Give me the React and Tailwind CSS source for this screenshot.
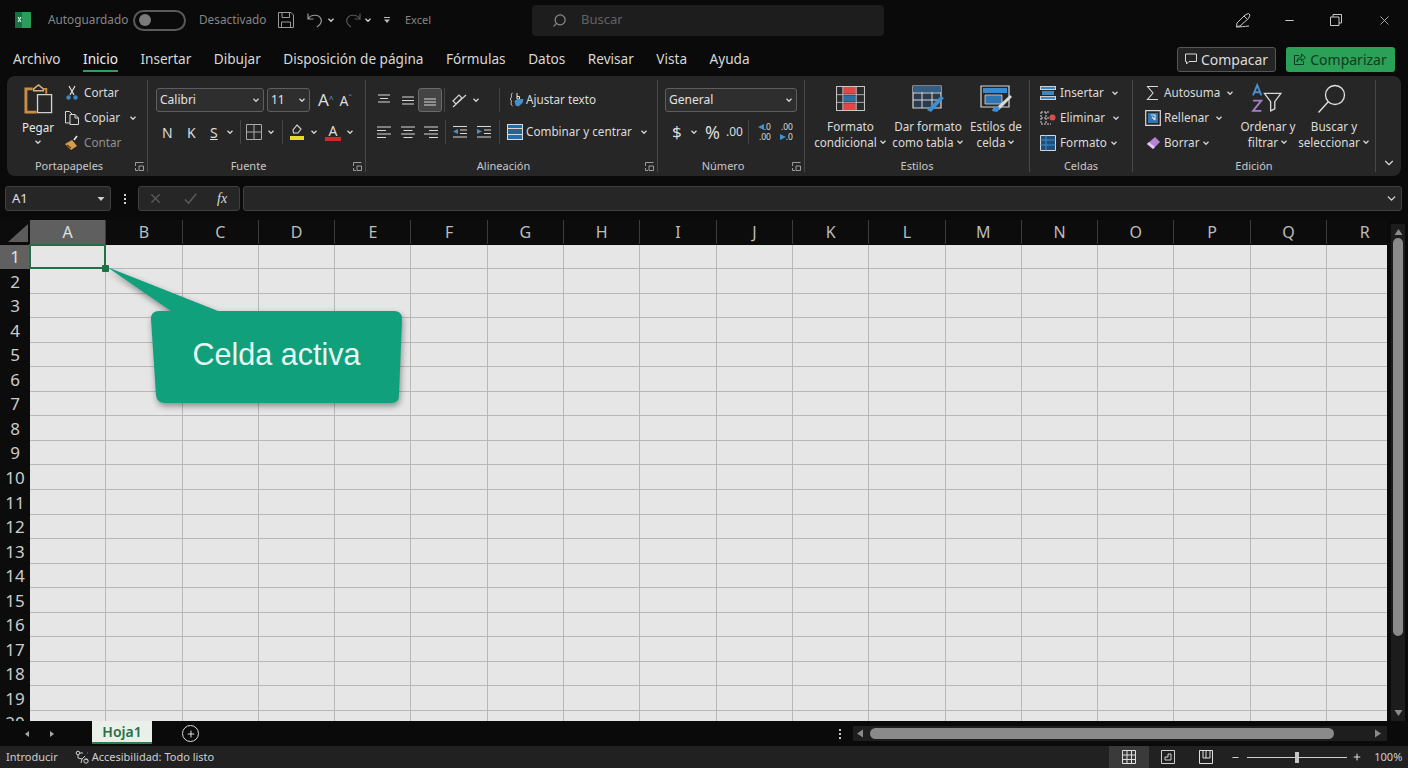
import { ChevronDown, Minus, Plus, Search, X } from "lucide-react";

const columns = ["A", "B", "C", "D", "E", "F", "G", "H", "I", "J", "K", "L", "M", "N", "O", "P", "Q", "R"];
const rows = Array.from({ length: 20 }, (_, i) => i + 1);
const tabs = ["Insertar", "Dibujar", "Disposición de página", "Fórmulas", "Datos", "Revisar", "Vista", "Ayuda"];

function Caret({ className = "" }) {
  return (
    <svg viewBox="0 0 8 8" className={`w-2 h-2 shrink-0 ${className}`} fill="none" stroke="#d4d4d4" strokeWidth="1.3">
      <path d="M1.5 2.8 4 5.3l2.5-2.5" />
    </svg>
  );
}

function Launcher() {
  return (
    <svg viewBox="0 0 9 9" className="absolute right-[3px] bottom-[5px] w-[9px] h-[9px]" fill="none" stroke="#aaa" strokeWidth="0.9">
      <path d="M.5 4V.5h8M.5 6v2.500H3" />
      <path d="M4 4h4.500v4.500H4z" />
    </svg>
  );
}

function Sep({ className = "" }) {
  return <div className={`w-px h-[24px] bg-[#444] shrink-0 ${className}`} />;
}

function Group({ label, width, launcher, children }) {
  return (
    <div className={`relative flex flex-col shrink-0 ${width}`}>
      <div className="h-[78px] text-[11.7px] text-[#dcdcdc]">{children}</div>
      <div className={`h-[22px] pt-[2px] flex items-center justify-center text-[11px] text-[#c8c8c8] ${launcher ? "pr-[16px]" : ""}`}>{label}</div>
      {launcher && <Launcher />}
    </div>
  );
}

function Divider() {
  return <div className="w-px my-[4px] bg-[#474747] shrink-0" />;
}

function Lines({ d }) {
  return (
    <svg viewBox="0 0 16 16" className="w-4 h-4 shrink-0" fill="none" stroke="#d8d8d8" strokeWidth="1.1">
      <path d={d} />
    </svg>
  );
}

function Combo({ width, text, margin = "" }) {
  return (
    <div className={`h-[24px] rounded-[3px] border border-[#5e5e5e] bg-[#2e2e2e] flex items-center justify-between pl-[3px] pr-[3px] text-[12px] text-[#e2e2e2] ${width} ${margin}`}>
      {text}
      <Caret />
    </div>
  );
}

function SmallRow({ icon, text, gap = "ml-[4px]", caretGap, muted }) {
  return (
    <div className="flex items-center h-[25px]">
      <div className="w-4 h-4 shrink-0 flex items-center justify-center">{icon}</div>
      <span className={`${gap} whitespace-nowrap ${muted ? "text-[#8f8f8f]" : ""}`}>{text}</span>
      {caretGap && <Caret className={caretGap} />}
    </div>
  );
}

function BigButton({ icon, lineOne, lineTwo, width }) {
  return (
    <div className={`flex flex-col items-center shrink-0 ${width}`}>
      <div className="h-[37px] flex items-center justify-center">{icon}</div>
      <div className="mt-[1px] leading-[16px] text-center whitespace-nowrap">
        <div>{lineOne}</div>
        <div className="flex items-center justify-center gap-[2px]">
          {lineTwo}
          <Caret />
        </div>
      </div>
    </div>
  );
}

function DecimalIcon({ top, bottom, arrowOnTop }) {
  const arrow = (
    <svg viewBox="0 0 6 6" className="w-[6px] h-[6px] shrink-0" fill="#4a90c8">
      <path d={arrowOnTop ? "M6 0v6L0 3z" : "M0 0v6l6-3z"} />
    </svg>
  );
  return (
    <div className="w-[17px] flex flex-col items-end text-[8.5px] leading-[10px]">
      <div className="flex items-center">
        {arrowOnTop && arrow}
        <span>{top}</span>
      </div>
      <div className="flex items-center">
        {!arrowOnTop && arrow}
        <span>{bottom}</span>
      </div>
    </div>
  );
}

const Paste = (
  <svg viewBox="0 0 32 34" className="w-[31px] h-[33px]" fill="none">
    <path d="M10 6H3v24h11" stroke="#c98d45" strokeWidth="3" />
    <path d="M11 6l5-4 5 4v2H11z" stroke="#d9b27e" strokeWidth="1.5" />
    <path d="M21 6h3v5" stroke="#c98d45" strokeWidth="2" />
    <path d="M15 12h14.500v18.500H15z" fill="#262626" stroke="#cfcfcf" strokeWidth="1.4" />
  </svg>
);

const Scissors = (
  <svg viewBox="0 0 16 16" className="w-4 h-4" fill="none">
    <path d="M5 1l5 9M11 1 6 10" stroke="#e4e4e4" strokeWidth="1.2" />
    <circle cx="4.500" cy="12.500" r="2.200" fill="#3f87c4" />
    <circle cx="11.500" cy="12.500" r="2.200" fill="#3f87c4" />
  </svg>
);

const CopyIcon = (
  <svg viewBox="0 0 16 16" className="w-4 h-4" fill="none" stroke="#d8d8d8" strokeWidth="1">
    <path d="M6 13H1.500V1.500h4L8 4" />
    <path d="M6 4.500h5l3.500 3.500v6.500H6zM11 4.500V8h3.500" />
  </svg>
);

const Brush = (
  <svg viewBox="0 0 16 16" className="w-4 h-4" fill="none">
    <path d="M1 9l7-4 5 6-6 4z" fill="#d99c4c" />
    <path d="M3 10l4 3" stroke="#5b3d16" strokeWidth="1.200" />
    <path d="M10 5l3-4" stroke="#e8e8e8" strokeWidth="1.600" />
  </svg>
);

const Fill = (
  <svg viewBox="0 0 16 16" className="w-4 h-4" fill="none">
    <path d="M8 1l4 4-3 4H4.500L4 6z" stroke="#d8d8d8" strokeWidth="1.100" />
    <path d="M1 12h14v4H1z" fill="#e6dc2c" />
  </svg>
);

const Borders = (
  <svg viewBox="0 0 16 16" className="w-4 h-4" fill="none" stroke="#a9a9a9" strokeWidth="1">
    <path d="M.5.500h15v15H.5zM8 .5v15M.5 8h15" />
  </svg>
);

const Wrap = (
  <svg viewBox="0 0 16 16" className="w-4 h-4" fill="none">
    <path d="M4.500 1C2 2 5 5 2 7c3 2-.5 5 2.500 7" stroke="#d8d8d8" strokeWidth="1" />
    <path d="M9 1v6M9 4.500h2.500v2.500H9" stroke="#e4e4e4" strokeWidth="1" />
    <path d="M6.500 9l3-2 6 0-1 4-4 3.500-3-1z" fill="#4a90c8" />
  </svg>
);

const Merge = (
  <svg viewBox="0 0 16 16" className="w-4 h-4">
    <path d="M0 0h16v16H0z" fill="#d8d8d8" />
    <path d="M1 1h14v3H1z" fill="#1f6fae" />
    <path d="M1 5h14v5H1z" fill="#2f5f86" />
    <path d="M1 11h14v4H1z" fill="#1f6fae" />
  </svg>
);

const CondFormat = (
  <svg viewBox="0 0 30 26" className="w-[29px] h-[25px]">
    <path d="M0 0h30v26H0z" fill="#cfcfcf" />
    <path d="M1 1h28v24H1z" fill="#2b2b2b" />
    <path d="M7 1h14v7H7zM7 18h14v7H7z" fill="#e04848" />
    <path d="M7 10h14v6H7z" fill="#2d6ea5" />
    <path d="M0 9h30M0 17h30M7 0v26M21 0v26" stroke="#cfcfcf" strokeWidth="0.800" />
  </svg>
);

const TableFormat = (
  <svg viewBox="0 0 32 28" className="w-[32px] h-[28px]" fill="none">
    <path d="M1 1h28v22H1z" fill="#2a3c4e" stroke="#d8d8d8" strokeWidth="1.200" />
    <path d="M1 8h28M1 15h28M10 1v22M20 1v22" stroke="#d8d8d8" />
    <path d="M1 1h28v6H1z" fill="#335f86" />
    <path d="M15 25l14-14 3 2-13 14z" fill="#3d8fd1" />
  </svg>
);

const CellStyles = (
  <svg viewBox="0 0 32 28" className="w-[32px] h-[28px]" fill="none">
    <path d="M1 1h28v21H1z" stroke="#d8d8d8" strokeWidth="1.200" />
    <path d="M3 3h24v5H3z" fill="#3a8ad0" />
    <path d="M5 10h17v9H5z" fill="#2f74b3" stroke="#d8d8d8" strokeWidth="0.800" />
    <path d="M16 23l14-13 2 2-13 13z" fill="#d8d8d8" />
    <path d="M13 23l5-2 2 3-3 3-5-1z" fill="#3d8fd1" />
  </svg>
);

const CellInsert = (
  <svg viewBox="0 0 16 16" className="w-4 h-4">
    <path d="M0 1h16v4H0zM0 11h16v4H0z" fill="#cfcfcf" />
    <path d="M1 2h14v2H1zM1 12h14v2H1z" fill="#3e86c0" />
    <path d="M2 6h12v4H2z" fill="#3e86c0" />
  </svg>
);

const CellDelete = (
  <svg viewBox="0 0 16 16" className="w-4 h-4" fill="none">
    <path d="M1 2h9M1 8h8M1 14h10M1 2v12M6 2v12" stroke="#cfcfcf" strokeDasharray="2 1" />
    <circle cx="12.500" cy="7.500" r="3" fill="#d9504a" />
  </svg>
);

const CellFormat = (
  <svg viewBox="0 0 16 16" className="w-4 h-4" fill="none">
    <path d="M.5.500h15v15H.5z" fill="#1f4f78" stroke="#d8d8d8" />
    <path d="M.5 5h15M.5 10h15M6 .5v15" stroke="#3e8ecc" />
  </svg>
);

const Sigma = (
  <svg viewBox="0 0 16 16" className="w-4 h-4" fill="none" stroke="#d8d8d8" strokeWidth="1.100">
    <path d="M13 1.500H2.500L8 8l-5.500 6.500H13" />
  </svg>
);

const FillDown = (
  <svg viewBox="0 0 16 16" className="w-4 h-4" fill="none">
    <path d="M.7.700h14.600v14.600H.7z" stroke="#d8d8d8" strokeWidth="1.200" />
    <path d="M3 3h10v10H3z" fill="#2f78b5" />
    <path d="M6 5h4v5M10 10 7 7" stroke="#e8e8e8" strokeWidth="1.100" />
  </svg>
);

const Eraser = (
  <svg viewBox="0 0 16 16" className="w-4 h-4">
    <path d="M10 2l5 5-7 7-6-5z" fill="#b583d6" />
    <path d="M2 9l6 5 2-2-6-5z" fill="#e0c6f0" />
  </svg>
);

const SortFilter = (
  <svg viewBox="0 0 30 30" className="w-[31px] h-[31px] -translate-x-[2px]" fill="none">
    <path d="M2 12 6 2l4 10M3.500 9h5" stroke="#4a90d0" strokeWidth="1.800" />
    <path d="M2 17h8l-8 10h8" stroke="#a77fc9" strokeWidth="1.800" />
    <path d="M13 10h16l-6 8v7l-4 2v-9z" stroke="#d8d8d8" strokeWidth="1.300" />
  </svg>
);

const Find = (
  <svg viewBox="0 0 30 30" className="w-[30px] h-[30px] -translate-x-[2px]" fill="none" stroke="#e2e2e2" strokeWidth="1.300">
    <circle cx="18" cy="11" r="9.500" />
    <path d="M11 18 1.500 28.500" />
  </svg>
);

function Ribbon() {
  return (
    <div className="mx-[7px] h-[100px] rounded-lg bg-[#262626] flex">
      <Group label="Portapapeles" width="w-[140px]" launcher>
        <div className="flex pt-[7px] pl-[14px]">
          <div className="w-[34px] flex flex-col items-center">
            {Paste}
            <span className="mt-[3px] text-[#e8e8e8] leading-[16px]">Pegar</span>
            <Caret className="mt-[3px]" />
          </div>
          <div className="ml-[9px] -mt-[3px]">
            <SmallRow icon={Scissors} text="Cortar" />
            <SmallRow icon={CopyIcon} text="Copiar" caretGap="ml-[9px]" />
            <SmallRow icon={Brush} text="Contar" muted />
          </div>
        </div>
      </Group>
      <Divider />
      <Group label="Fuente" width="w-[217px]" launcher>
        <div className="pt-[12px] pl-[8px]">
          <div className="flex items-center h-[24px]">
            <Combo width="w-[108px]" text="Calibri" />
            <Combo width="w-[43px]" text="11" margin="ml-[3px]" />
            <span className="ml-[8px] text-[17px] text-[#dcdcdc]">A<sup className="text-[8px] text-[#5aa5dc]">^</sup></span>
            <span className="ml-[6px] text-[14px] text-[#dcdcdc]">A<sup className="text-[8px] text-[#5aa5dc]">ˇ</sup></span>
          </div>
          <div className="flex items-center h-[24px] mt-[8px] text-[14px]">
            <span className="ml-[6px] w-[8px]">N</span>
            <span className="ml-[17px] w-[8px]">K</span>
            <span className="ml-[15px] w-[8px] underline">S</span>
            <Caret className="ml-[8px]" />
            <Sep className="ml-[6px]" />
            <div className="ml-[5px]">{Borders}</div>
            <Caret className="ml-[5px]" />
            <Sep className="ml-[7px]" />
            <div className="ml-[6px]">{Fill}</div>
            <Caret className="ml-[5px]" />
            <div className="ml-[7px] w-4 flex flex-col items-center leading-[13px]">
              <span className="text-[14px] leading-[13px]">A</span>
              <span className="w-4 h-[4px] bg-[#d8242b]" />
            </div>
            <Caret className="ml-[5px]" />
          </div>
        </div>
      </Group>
      <Divider />
      <Group label="Alineación" width="w-[291px]" launcher>
        <div className="pt-[12px] pl-[10px]">
          <div className="flex items-center h-[24px]">
            <Lines d="M2 3h12M4 6.500h8M2 10h12" />
            <div className="ml-[8px]"><Lines d="M2 5h12M2 8.500h12M2 12h12" /></div>
            <div className="ml-[2px] w-[24px] h-[24px] rounded-[3px] border border-[#6a6a6a] bg-[#444] flex items-center justify-center">
              <Lines d="M2 7h12M2 10h12M2 13h12" />
            </div>
            <Sep className="ml-[2px]" />
            <div className="ml-[6px]">
              <svg viewBox="0 0 16 16" className="w-4 h-4" fill="none" stroke="#d8d8d8" strokeWidth="1.100">
                <path d="M2 9l6-6 3 3-6 6zM2 15 15 3" />
              </svg>
            </div>
            <Caret className="ml-[5px]" />
            <Sep className="ml-[19px]" />
            <div className="ml-[8px]">{Wrap}</div>
            <span className="ml-[2px] whitespace-nowrap">Ajustar texto</span>
          </div>
          <div className="flex items-center h-[24px] mt-[8px]">
            <Lines d="M1 3h14M1 6.500h9M1 10h14M1 13.500h9" />
            <div className="ml-[8px]"><Lines d="M1 3h14M3.500 6.500h9M1 10h14M3.500 13.500h9" /></div>
            <div className="ml-[7px]"><Lines d="M1 3h14M6 6.500h9M1 10h14M6 13.500h9" /></div>
            <Sep className="ml-[6px]" />
            <div className="ml-[6px]">
              <svg viewBox="0 0 16 16" className="w-4 h-4" fill="none" stroke="#d8d8d8" strokeWidth="1.100">
                <path d="M1 2.500h14M8 6h7M8 9.500h7M1 13h14" />
                <path d="M6 5v5L1 7.500z" fill="#4a90c8" stroke="none" />
              </svg>
            </div>
            <div className="ml-[8px]">
              <svg viewBox="0 0 16 16" className="w-4 h-4" fill="none" stroke="#d8d8d8" strokeWidth="1.100">
                <path d="M1 2.500h14M8 6h7M8 9.500h7M1 13h14" />
                <path d="M1 5v5l5-2.500z" fill="#4a90c8" stroke="none" />
              </svg>
            </div>
            <Sep className="ml-[7px]" />
            <div className="ml-[7px]">{Merge}</div>
            <span className="ml-[3px] whitespace-nowrap">Combinar y centrar</span>
            <Caret className="ml-[8px]" />
          </div>
        </div>
      </Group>
      <Divider />
      <Group label="Número" width="w-[146px]" launcher>
        <div className="pt-[12px] pl-[7px]">
          <Combo width="w-[132px]" text="General" />
          <div className="flex items-center h-[24px] mt-[8px]">
            <span className="ml-[7px] text-[17px] w-[10px]">$</span>
            <Caret className="ml-[8px]" />
            <span className="ml-[7px] text-[18px]">%</span>
            <span className="ml-[6px] text-[12px]">.00</span>
            <Sep className="ml-[5px]" />
            <div className="ml-[5px]"><DecimalIcon top=".0" bottom=".00" arrowOnTop /></div>
            <div className="ml-[5px]"><DecimalIcon top=".00" bottom=".0" /></div>
          </div>
        </div>
      </Group>
      <Divider />
      <Group label="Estilos" width="w-[224px]">
        <div className="flex pt-[4px] pl-[8px]">
          <BigButton icon={CondFormat} lineOne="Formato" lineTwo="condicional" width="w-[75px]" />
          <BigButton icon={TableFormat} lineOne="Dar formato" lineTwo="como tabla" width="w-[74px] ml-[3px]" />
          <BigButton icon={CellStyles} lineOne="Estilos de" lineTwo="celda" width="w-[58px] ml-[2px]" />
        </div>
      </Group>
      <Divider />
      <Group label="Celdas" width="w-[102px]">
        <div className="pt-[4px] pl-[10px]">
          <SmallRow icon={CellInsert} text="Insertar" caretGap="ml-[7px]" />
          <SmallRow icon={CellDelete} text="Eliminar" caretGap="ml-[7px]" />
          <SmallRow icon={CellFormat} text="Formato" caretGap="ml-[3px]" />
        </div>
      </Group>
      <Divider />
      <Group label="Edición" width="w-[242px]">
        <div className="flex pt-[4px] pl-[12px]">
          <div className="w-[94px] shrink-0">
            <SmallRow icon={Sigma} text="Autosuma" gap="ml-[3px]" caretGap="ml-[6px]" />
            <SmallRow icon={FillDown} text="Rellenar" gap="ml-[3px]" caretGap="ml-[6px]" />
            <SmallRow icon={Eraser} text="Borrar" gap="ml-[3px]" caretGap="ml-[3px]" />
          </div>
          <BigButton icon={SortFilter} lineOne="Ordenar y" lineTwo="filtrar" width="w-[58px]" />
          <BigButton icon={Find} lineOne="Buscar y" lineTwo="seleccionar" width="w-[74px]" />
        </div>
      </Group>
      <Divider />
      <div className="flex-1 flex items-end justify-center pb-[6px]">
        <ChevronDown size={14} color="#d8d8d8" strokeWidth={2} />
      </div>
    </div>
  );
}

function TitleBar() {
  return (
    <div className="h-[40px] flex items-center text-[11.8px] text-[#858585]">
      <svg viewBox="0 0 16 16" className="ml-[15px] w-4 h-4 shrink-0">
        <path d="M1 0h14a1 1 0 0 1 1 1v14a1 1 0 0 1-1 1H1a1 1 0 0 1-1-1V1a1 1 0 0 1 1-1z" fill="#2a9d5d" />
        <path d="M0 0h7v16H0z" fill="#17703f" />
        <path d="M3 5l3 5M6 5l-3 5" stroke="#cfeedd" strokeWidth="1.200" />
      </svg>
      <span className="ml-[17px] w-[85px]">Autoguardado</span>
      <div className="w-[53px] h-[21px] rounded-full border-2 border-[#5a5a5a] flex items-center pl-[4px]">
        <div className="w-[12px] h-[12px] rounded-full bg-[#7a7a7a]" />
      </div>
      <span className="ml-[13px] w-[79px]">Desactivado</span>
      <svg viewBox="0 0 16 16" className="w-4 h-4 shrink-0" fill="none" stroke="#9a9a9a" strokeWidth="1">
        <path d="M.5.500h12.500l2.500 2.500v12.500H.5zM4 1v4.500h7.500V1M3.500 15.500V10h9v5.500" />
      </svg>
      <svg viewBox="0 0 16 16" className="ml-[13px] w-4 h-4 shrink-0" fill="none" stroke="#9a9a9a" strokeWidth="1.200">
        <path d="M1 1.500V7h5.500M1 7c3-5 11-5 13 0 1 3-1 6-4 8" />
      </svg>
      <Caret className="ml-[4px]" />
      <svg viewBox="0 0 16 16" className="ml-[10px] w-4 h-4 shrink-0" fill="none" stroke="#555" strokeWidth="1.200">
        <path d="M15 1.500V7H9.500M15 7C12 2 4 2 2 7c-1 3 1 6 4 8" />
      </svg>
      <Caret className="ml-[3px]" />
      <svg viewBox="0 0 8 8" className="ml-[11px] w-2 h-2 shrink-0" fill="#bbb">
        <path d="M1 1h6v1H1zM1 3.500h6L4 7z" />
      </svg>
      <span className="ml-[14px] text-[11px] w-[27px]">Excel</span>
      <div className="ml-[100px] w-[352px] h-[31px] rounded-[4px] bg-[#1d1d1d] flex items-center pl-[20px] text-[13px] text-[#626262]">
        <Search size={15} color="#8a8a8a" className="-scale-x-100" />
        <span className="ml-[14px]">Buscar</span>
      </div>
      <svg viewBox="0 0 16 16" className="ml-[351px] w-4 h-4 shrink-0" fill="none" stroke="#c8c8c8" strokeWidth="1">
        <path d="M5 14 1.500 14.500 2 11l8-8 3.500-1.500L15 3l-1.500 3.500zM9 4l3 3M1 15c4 0 8-.5 13-1" />
      </svg>
      <Minus size={13} color="#c8c8c8" className="ml-[32px]" />
      <svg viewBox="0 0 12 12" className="ml-[34px] w-[12px] h-[12px]" fill="none" stroke="#c8c8c8">
        <path d="M.5 3h8.500v8.500H.5zM3 3V.5h8.500V9H9" />
      </svg>
      <X size={15} color="#c8c8c8" strokeWidth={1.300} className="ml-[35px]" />
    </div>
  );
}

function TabRow() {
  return (
    <div className="h-[36px] pt-[2px] flex items-center text-[13.6px] text-[#d8d8d8] pl-[13px] pr-[13px]">
      <span>Archivo</span>
      <span className="relative ml-[22.5px] text-[#eeeeee]">
        Inicio
        <span className="absolute -bottom-[3px] left-0 right-0 h-[2px] bg-[#2f9e5b]" />
      </span>
      {tabs.map((t) => (
        <span key={t} className="ml-[22.5px] whitespace-nowrap">{t}</span>
      ))}
      <div className="ml-auto h-[25px] w-[99px] rounded-[3px] border border-[#565656] bg-[#242424] flex items-center justify-center gap-[4px] text-[14px] text-[#dcdcdc]">
        <svg viewBox="0 0 12 12" className="w-[12px] h-[12px]" fill="none" stroke="#d8d8d8">
          <path d="M.5 1h11v7.500H4L1.500 11V8.500h-1z" />
        </svg>
        Compacar
      </div>
      <div className="ml-[10px] h-[25px] w-[109px] rounded-[3px] bg-[#2ba158] flex items-center justify-center gap-[4px] text-[14px] text-[#12391f]">
        <svg viewBox="0 0 12 12" className="w-[12px] h-[12px]" fill="none" stroke="#12391f">
          <path d="M5 2.500H.5v9h9V8M7.500 1l4 3.500-4 3.500V6C5 6 3.500 7 3 9c0-3 1.500-5 4.500-5z" />
        </svg>
        Comparizar
      </div>
    </div>
  );
}

function FormulaBar() {
  return (
    <div className="h-[25px] mt-[10px] flex items-stretch pl-[5px] pr-[6px]">
      <div className="w-[106px] rounded-[3px] border border-[#404040] bg-[#262626] flex items-center justify-between pl-[6px] pr-[5px] text-[13px] text-[#e0e0e0]">
        A1
        <svg viewBox="0 0 8 8" className="w-2 h-2" fill="#cfcfcf"><path d="M.5 2h7L4 6z" /></svg>
      </div>
      <div className="w-[27px] flex flex-col items-center justify-center gap-[2px]">
        <span className="w-[2px] h-[2px] bg-[#d0d0d0]" />
        <span className="w-[2px] h-[2px] bg-[#d0d0d0]" />
        <span className="w-[2px] h-[2px] bg-[#d0d0d0]" />
      </div>
      <div className="w-[102px] rounded-[3px] border border-[#404040] bg-[#262626] flex items-center pl-[9px]">
        <X size={15} color="#5c5c5c" />
        <svg viewBox="0 0 16 16" className="ml-[20px] w-[15px] h-[15px]" fill="none" stroke="#5c5c5c" strokeWidth="1.600">
          <path d="M2 9l4 4 8-10" />
        </svg>
        <span className="ml-[19px] italic text-[14px] text-[#dcdcdc] font-['Liberation_Serif',serif]">fx</span>
      </div>
      <div className="ml-[3px] flex-1 rounded-[3px] border border-[#404040] bg-[#262626] flex items-center justify-end pr-[3px]">
        <ChevronDown size={13} color="#dcdcdc" strokeWidth={2.400} />
      </div>
    </div>
  );
}

function Callout() {
  return (
    <div className="absolute left-[105px] top-[45px] w-[300px] h-[142px]">
      <svg viewBox="0 0 300 142" className="absolute inset-0 w-full h-full drop-shadow-[1px_3px_3px_rgba(0,0,0,0.4)]">
        <path
          d="M2 2 113 46H289q8 0 8 8l-3 76q0 8-8 8H60q-8 0-9-8L46 54q0-8 8-8H66Z"
          fill="#10a07c"
        />
      </svg>
      <div className="absolute left-[46px] right-[3px] top-[46px] h-[88px] flex items-center justify-center text-[30.5px] text-[#e8f7f2] font-['Liberation_Sans',sans-serif]">
        Celda activa
      </div>
    </div>
  );
}

function Sheet() {
  return (
    <div className="relative w-[1387px] h-[501px] overflow-hidden shrink-0">
      <div className="grid grid-cols-[30px_repeat(18,76.3px)] auto-rows-[24.55px]">
        <div className="bg-[#0c0c0c] flex items-end justify-end pr-[2px] pb-[2px] h-[24px]">
          <div className="w-[20px] h-[18px] bg-[#5b5b5b] [clip-path:polygon(100%_0,100%_100%,0_100%)]" />
        </div>
        {columns.map((c) => (
          <div
            key={c}
            className={`h-[24px] flex items-center justify-center text-[16px] border-r border-[#3c3c3c] ${
              c === "A" ? "bg-[#5f5f5f] text-[#e0e0e0]" : "bg-[#0c0c0c] text-[#bdbdbd]"
            }`}
          >
            {c}
          </div>
        ))}
        {rows.map((r) => (
          <div key={r} className="contents">
            <div className={`flex items-center justify-center text-[17px] ${r === 1 ? "bg-[#606060] text-[#e0e0e0]" : "bg-[#0c0c0c] text-[#cdcdcd]"}`}>
              {r}
            </div>
            {columns.map((c) => (
              <div key={c} className="relative bg-[#e6e6e6] border-r border-b border-[#b8b8b8]">
                {r === 1 && c === "A" && (
                  <div className="absolute z-10 -inset-px border-2 border-[#1f7145]">
                    <span className="absolute -right-[5px] -bottom-[5px] w-[7px] h-[7px] rounded-[1px] bg-[#1f7145]" />
                  </div>
                )}
              </div>
            ))}
          </div>
        ))}
      </div>
      <Callout />
    </div>
  );
}

function VerticalScroll() {
  return (
    <div className="ml-[4px] w-[14px] h-[497px] mt-[4px] bg-[#1c1c1c] flex flex-col items-center">
      <svg viewBox="0 0 8 6" className="mt-[5px] w-[9px] h-[6px]" fill="#8a8a8a"><path d="M4 0l4 6H0z" /></svg>
      <div className="mt-[3px] w-[10px] h-[398px] rounded-full bg-[#8a8a8a]" />
      <svg viewBox="0 0 8 6" className="mt-auto mb-[5px] w-[9px] h-[6px]" fill="#8a8a8a"><path d="M4 6 8 0H0z" /></svg>
    </div>
  );
}

function SheetTabs() {
  return (
    <div className="h-[25px] flex items-center">
      <svg viewBox="0 0 6 8" className="ml-[24px] w-[6px] h-2" fill="#a8a8a8"><path d="M5 1v6L1 4z" /></svg>
      <svg viewBox="0 0 6 8" className="ml-[19px] w-[6px] h-2" fill="#a8a8a8"><path d="M1 1v6l4-3z" /></svg>
      <div className="ml-[37px] h-full w-[60px] pb-[2px]">
        <div className="h-full bg-[#e9f0ea] border-b-2 border-[#2a7d4d] flex items-center justify-center text-[14px] font-semibold text-[#2a6e47]">
          Hoja1
        </div>
      </div>
      <div className="ml-[30px] w-[17px] h-[17px] rounded-full border border-[#dcdcdc] flex items-center justify-center">
        <Plus size={10} color="#dcdcdc" strokeWidth={2.500} />
      </div>
      <div className="ml-[640px] flex flex-col gap-[2px]">
        <span className="w-[2px] h-[2px] bg-[#c8c8c8]" />
        <span className="w-[2px] h-[2px] bg-[#c8c8c8]" />
        <span className="w-[2px] h-[2px] bg-[#c8c8c8]" />
      </div>
      <div className="ml-[12px] w-[534px] h-[15px] bg-[#1e1e1e] flex items-center">
        <svg viewBox="0 0 6 8" className="ml-[4px] w-[6px] h-[9px]" fill="#8a8a8a"><path d="M6 0v8L0 4z" /></svg>
        <div className="ml-[7px] w-[464px] h-[11px] rounded-full bg-[#8a8a8a]" />
        <svg viewBox="0 0 6 8" className="ml-auto mr-[6px] w-[6px] h-[9px]" fill="#8a8a8a"><path d="M0 0v8l6-4z" /></svg>
      </div>
    </div>
  );
}

function StatusBar() {
  return (
    <div className="h-[22px] bg-[#212121] flex items-center text-[11px] text-[#cfcfcf]">
      <span className="ml-[6px]">Introducir</span>
      <svg viewBox="0 0 14 14" className="ml-[17px] w-[14px] h-[14px] shrink-0" fill="none" stroke="#cfcfcf" strokeWidth="1">
        <circle cx="3" cy="3" r="1.800" />
        <path d="M5 3h3M3 5v3l4 1 3-3M7 9l-1 4M10 9l3 1M12 3h.5" />
        <circle cx="11" cy="11" r="2.200" />
      </svg>
      <span className="ml-[3px]">Accesibilidad: Todo listo</span>
      <div className="ml-[895px] w-[40px] h-full bg-[#3a3a3a] flex items-center justify-center">
        <svg viewBox="0 0 14 14" className="w-[14px] h-[14px]" fill="none" stroke="#e0e0e0">
          <path d="M.5.500h13v13H.5zM.5 5h13M.5 9.500h13M5 .5v13M9.500.5v13" />
        </svg>
      </div>
      <svg viewBox="0 0 14 14" className="ml-[12px] w-[14px] h-[14px]" fill="none" stroke="#cfcfcf">
        <path d="M.5.500h13v13H.5zM4 10V7h3V4h3v6z" />
      </svg>
      <svg viewBox="0 0 14 14" className="ml-[24px] w-[14px] h-[14px]" fill="none" stroke="#e0e0e0">
        <path d="M.5.500h13v13H.5zM4 1v7h3V1M7 8h4V1" />
      </svg>
      <Minus size={9} color="#cfcfcf" strokeWidth={3} className="ml-[18px]" />
      <div className="relative ml-[7px] w-[100px] h-px bg-[#cfcfcf]">
        <span className="absolute left-[48px] -top-[5px] w-[4px] h-[11px] bg-[#c4c4c4]" />
      </div>
      <Plus size={10} color="#e0e0e0" strokeWidth={2.500} className="ml-[5px]" />
      <span className="ml-[12px]">100%</span>
    </div>
  );
}

export default function App() {
  return (
    <div className="w-[1408px] h-[768px] overflow-hidden bg-[#0a0a0a] font-['Noto_Sans',sans-serif]">
      <TitleBar />
      <TabRow />
      <Ribbon />
      <FormulaBar />
      <div className="flex mt-[9px]">
        <Sheet />
        <VerticalScroll />
      </div>
      <SheetTabs />
      <StatusBar />
    </div>
  );
}
